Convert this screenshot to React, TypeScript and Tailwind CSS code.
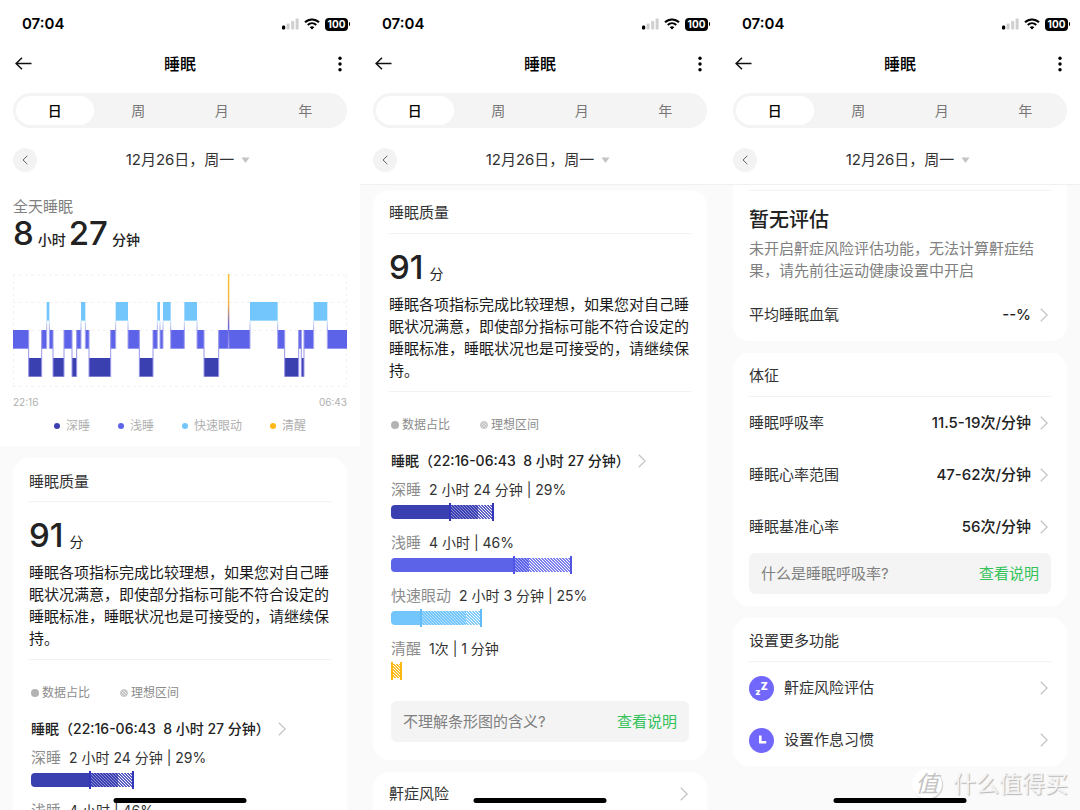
import type { ReactNode } from 'react';

type Level = 'A' | 'R' | 'L' | 'D';

const LEVELS: Record<Level, { y: number; color: string }> = {
  A: { y: 0, color: '#fdb813' },
  R: { y: 84, color: '#72c6fb' },
  L: { y: 168, color: '#5d63e8' },
  D: { y: 252, color: '#3b40b0' },
};

const BAR = 56;
const CHART_END = 1002;

const STAGES: [Level, number][] = [
  ['L', 0], ['D', 47], ['L', 86], ['R', 101], ['L', 109], ['D', 120], ['L', 153], ['D', 177],
  ['L', 191], ['R', 204], ['L', 217], ['D', 228], ['L', 293], ['R', 308], ['L', 345], ['D', 379],
  ['L', 420], ['R', 433], ['L', 441], ['R', 450], ['L', 473], ['R', 514], ['L', 552], ['D', 573],
  ['L', 617], ['R', 711], ['L', 794], ['D', 815], ['L', 857], ['D', 865], ['L', 873], ['R', 902],
  ['L', 943],
];

const AWAKE_AT = 647;

function Chevron() {
  return (
    <svg className="h-3.5 w-2 shrink-0" viewBox="0 0 8 14" fill="none" stroke="#c2c2c2" strokeWidth="1.2" aria-hidden="true">
      <path d="M0.8 0.8 7.2 7 0.8 13.2" />
    </svg>
  );
}

function StatusBar() {
  return (
    <div className="flex h-12 items-center justify-between pr-2.5 pl-[22px]">
      <span className="text-[15px] font-semibold">07:04</span>
      <div className="flex items-center gap-[5px]">
        <svg className="h-3 w-[17px]" viewBox="0 0 17 12" aria-hidden="true">
          <rect x="0" y="7.5" width="3.2" height="4" rx="1.2" fill="#000" />
          <rect x="4.6" y="5.5" width="3" height="6" rx="0.8" fill="#cfcfcf" />
          <rect x="9.2" y="3" width="3" height="8.5" rx="0.8" fill="#cfcfcf" />
          <rect x="13.6" y="0.5" width="3" height="11" rx="0.8" fill="#cfcfcf" />
        </svg>
        <svg className="h-3 w-4" viewBox="0 0 16 12" fill="none" stroke="#000" strokeWidth="2" aria-hidden="true">
          <path d="M1 4.3C5 0.4 11 0.4 15 4.3" />
          <path d="M3.7 7C6.2 4.7 9.8 4.7 12.3 7" />
          <path d="M8 11.5 5.7 9.2C7 8 9 8 10.3 9.2Z" fill="#000" stroke="none" />
        </svg>
        <div className="flex items-center gap-px">
          <span className="flex h-[13px] w-[23px] items-center justify-center rounded-[4px] bg-black text-[10px] leading-none font-bold text-white">
            100
          </span>
          <span className="h-1 w-px rounded-r bg-black" />
        </div>
      </div>
    </div>
  );
}

function Header({ scrolled }: { scrolled: boolean }) {
  return (
    <header className={scrolled ? 'shrink-0 border-b border-[#f0f0f0] bg-white' : 'shrink-0 border-b border-white bg-white'}>
      <StatusBar />
      <div className="flex h-[31px] items-center justify-between pr-[18px] pl-[15px]">
        <button type="button" aria-label="返回" className="w-5">
          <svg className="h-[13px] w-[17px]" viewBox="0 0 17 13" fill="none" stroke="#111" strokeWidth="1.5" aria-hidden="true">
            <path d="M16.5 6.5H1M7 0.7 1.1 6.5 7 12.3" />
          </svg>
        </button>
        <h1 className="text-base font-medium">睡眠</h1>
        <button type="button" aria-label="更多" className="flex w-[17px] justify-end">
          <svg className="h-4 w-1" viewBox="0 0 4 16" aria-hidden="true">
            <circle cx="2" cy="2.3" r="1.7" />
            <circle cx="2" cy="8" r="1.7" />
            <circle cx="2" cy="13.7" r="1.7" />
          </svg>
        </button>
      </div>
      <nav className="mx-[13px] mt-3.5 grid h-[35px] grid-cols-4 rounded-full bg-[#f4f4f4] text-sm text-[#777]">
        <button type="button" className="m-[3px] rounded-full bg-white font-medium text-black">日</button>
        <button type="button" className="m-[3px]">周</button>
        <button type="button" className="m-[3px]">月</button>
        <button type="button" className="m-[3px]">年</button>
      </nav>
      <div className="mx-[13px] mt-5 flex items-center pb-3">
        <button type="button" aria-label="前一天" className="flex size-6 items-center justify-center rounded-full bg-[#f3f3f3]">
          <svg className="h-2.5 w-1.5" viewBox="0 0 6 10" fill="none" stroke="#666" strokeWidth="1" aria-hidden="true">
            <path d="M5.3 0.8 1 5 5.3 9.2" />
          </svg>
        </button>
        <div className="flex flex-1 justify-center pr-2">
          <button type="button" className="flex items-center gap-[7px] text-[15px] leading-6 text-[#333]">
            12月26日，周一
            <svg className="h-1.5 w-[9px]" viewBox="0 0 9 6" fill="#c4c4c4" aria-hidden="true">
              <path d="M0.5 0.5h8L4.5 6Z" />
            </svg>
          </button>
        </div>
      </div>
    </header>
  );
}

function Phone({ scrolled = false, children }: { scrolled?: boolean; children: ReactNode }) {
  return (
    <section className="relative flex h-screen min-w-0 flex-col overflow-hidden bg-[#fafafa]">
      <Header scrolled={scrolled} />
      <div className="flex min-h-0 flex-1 flex-col overflow-hidden">{children}</div>
      <div className="absolute bottom-[7px] left-1/2 h-[5px] w-[133px] -translate-x-1/2 rounded-full bg-black" />
    </section>
  );
}

function SleepChart() {
  return (
    <svg className="block w-full" viewBox="0 0 1002 340" role="img" aria-label="睡眠阶段">
      <defs>
        <linearGradient id="link-rem" x1="0" y1="140" x2="0" y2="168" gradientUnits="userSpaceOnUse">
          <stop offset="0" stopColor="#c9e6fb" />
          <stop offset="1" stopColor="#a6a5ef" />
        </linearGradient>
        <linearGradient id="link-awake" x1="0" y1="0" x2="0" y2="224" gradientUnits="userSpaceOnUse">
          <stop offset="0" stopColor="#fdc02a" />
          <stop offset="0.4" stopColor="#f3b64a" />
          <stop offset="0.7" stopColor="#6b66dc" />
          <stop offset="1" stopColor="#a5a3f2" />
        </linearGradient>
      </defs>
      <path
        d="M0 3H1002M0 85H1002M0 169H1002M0 337H1002M1 3V337M1001 3V337"
        fill="none"
        stroke="#f1f1f1"
        strokeWidth="3"
        strokeDasharray="9 9"
      />
      {STAGES.map(([level, start], i) => {
        const end = i + 1 < STAGES.length ? STAGES[i + 1][1] : CHART_END;
        return (
          <rect key={start} x={start} y={LEVELS[level].y} width={end - start} height={BAR} fill={LEVELS[level].color} />
        );
      })}
      {STAGES.slice(1).map(([level, start], i) => {
        const other = STAGES[i][0];
        const rem = level === 'R' || other === 'R';
        return (
          <rect
            key={start}
            x={start - 1.5}
            y={rem ? 140 : 168}
            width="3"
            height={rem ? 84 : 140}
            fill={rem ? 'url(#link-rem)' : '#9896ea'}
          />
        );
      })}
      <rect x={AWAKE_AT - 2.5} y="0" width="4.5" height="224" fill="url(#link-awake)" />
    </svg>
  );
}

function Card({ title, children }: { title: string; children: ReactNode }) {
  return (
    <section className="mx-[13px] shrink-0 rounded-2xl bg-white px-4">
      <h2 className="flex h-11 items-center border-b border-[#f3f3f3] pt-1 text-[15px] text-[#333]">{title}</h2>
      {children}
    </section>
  );
}

function Tip({ question }: { question: string }) {
  return (
    <div className="flex h-[41px] items-center justify-between rounded-md bg-[#f4f4f4] px-3 pt-px text-[15px]">
      <span className="text-[#808080]">{question}</span>
      <a href="#help" className="text-[#35c25a]">查看说明</a>
    </div>
  );
}

interface Stage {
  name: string;
  value: string;
  low: number;
  actual: number;
  high: number;
  solid: string;
  tick: string;
  dense: string;
  sparse: string;
}

/* Bar positions are percentages of the track width. */
const STAGE_BARS: Stage[] = [
  {
    name: '深睡', value: '2 小时 24 分钟 | 29%', low: 19.6, actual: 28.4, high: 34,
    solid: 'bg-[#3b40b0]', tick: 'bg-[#3236b8]',
    dense: 'bg-[#8f91d8] bg-[linear-gradient(45deg,#3b40b0_25%,transparent_25%_50%,#3b40b0_50%_75%,transparent_75%)]',
    sparse: 'bg-[linear-gradient(45deg,#5a5ec4_25%,transparent_25%_50%,#5a5ec4_50%_75%,transparent_75%)]',
  },
  {
    name: '浅睡', value: '4 小时 | 46%', low: 40.8, actual: 45.6, high: 60,
    solid: 'bg-[#5d63e8]', tick: 'bg-[#5155e4]',
    dense: 'bg-[#a9acf3] bg-[linear-gradient(45deg,#5d63e8_25%,transparent_25%_50%,#5d63e8_50%_75%,transparent_75%)]',
    sparse: 'bg-[linear-gradient(45deg,#7b80ee_25%,transparent_25%_50%,#7b80ee_50%_75%,transparent_75%)]',
  },
  {
    name: '快速眼动', value: '2 小时 3 分钟 | 25%', low: 9.8, actual: 24.6, high: 30,
    solid: 'bg-[#72c6fb]', tick: 'bg-[#63bcf8]',
    dense: 'bg-[#b9e2fd] bg-[linear-gradient(45deg,#72c6fb_25%,transparent_25%_50%,#72c6fb_50%_75%,transparent_75%)]',
    sparse: 'bg-[linear-gradient(45deg,#82cdfb_25%,transparent_25%_50%,#82cdfb_50%_75%,transparent_75%)]',
  },
  {
    name: '清醒', value: '1次 | 1 分钟', low: 0, actual: 0, high: 3,
    solid: 'bg-[#fdb813]', tick: 'bg-[#fdb813]',
    dense: '',
    sparse: 'bg-[linear-gradient(45deg,#fdbf2c_25%,transparent_25%_50%,#fdbf2c_50%_75%,transparent_75%)]',
  },
];

function StageBar({ stage }: { stage: Stage }) {
  return (
    <li>
      <p className="text-sm leading-[22px] text-[#333]">
        <span className="mr-2 text-[15px] text-[#8c8c8c]">{stage.name}</span>
        {stage.value}
      </p>
      <div className="mt-0.5 flex h-[18px] items-center">
        <span className={`h-3.5 rounded-l ${stage.solid}`} style={{ width: `${stage.low}%` }} />
        <span className={`h-[18px] w-0.5 ${stage.tick}`} />
        <span className={`h-3.5 bg-size-[3px_3px] ${stage.dense}`} style={{ width: `${stage.actual - stage.low}%` }} />
        <span className={`h-3.5 bg-size-[3px_3px] ${stage.sparse}`} style={{ width: `${stage.high - stage.actual - 0.7}%` }} />
        <span className={`h-[18px] w-0.5 ${stage.tick}`} />
      </div>
    </li>
  );
}

function QualityCard() {
  return (
    <Card title="睡眠质量">
      <div className="flex items-baseline gap-1.5 pt-4 text-[#222]">
        <span className="text-[33px] leading-[34px] font-medium">91</span>
        <span className="text-sm leading-[22px]">分</span>
      </div>
      <p className="mt-[9px] border-b border-[#f3f3f3] pb-[9px] text-[15px] leading-[22px] text-[#1a1a1a]">
        睡眠各项指标完成比较理想，如果您对自己睡眠状况满意，即使部分指标可能不符合设定的睡眠标准，睡眠状况也是可接受的，请继续保持。
      </p>
      <div className="px-0.5 pb-[18px]">
        <div className="mt-[23px] flex gap-[30px] text-xs leading-5 text-[#8c8c8c]">
          <span className="flex items-center gap-[3px]">
            <i className="size-2 rounded-full bg-[#b3b3b3]" />
            数据占比
          </span>
          <span className="flex items-center gap-[3px]">
            <i className="size-2 rounded-full border border-[#c4c4c4] bg-[#ececec] bg-[linear-gradient(45deg,#c4c4c4_25%,transparent_25%_50%,#c4c4c4_50%_75%,transparent_75%)] bg-size-[3px_3px]" />
            理想区间
          </span>
        </div>
        <button type="button" className="mt-[15px] flex items-center gap-2 text-sm leading-[22px] font-medium whitespace-pre text-[#222]">
          {'睡眠（22:16-06:43  8 小时 27 分钟）'}
          <Chevron />
        </button>
        <ul className="mt-[7px] mb-[21px] flex flex-col gap-[11px]">
          {STAGE_BARS.map((stage) => (
            <StageBar key={stage.name} stage={stage} />
          ))}
        </ul>
        <Tip question="不理解条形图的含义?" />
      </div>
    </Card>
  );
}

function LinkRow({ label, value, icon }: { label: string; value?: string; icon?: ReactNode }) {
  return (
    <button type="button" className="flex h-[52px] w-full items-center pr-[3px] text-left text-[15px] text-[#333]">
      {icon}
      <span className="flex-1">{label}</span>
      {value && <span className="mr-[9px] font-medium text-[#222]">{value}</span>}
      <Chevron />
    </button>
  );
}

const LEGEND = [
  { name: '深睡', dot: 'bg-[#3b40b0]' },
  { name: '浅睡', dot: 'bg-[#5d63e8]' },
  { name: '快速眼动', dot: 'bg-[#72c6fb]' },
  { name: '清醒', dot: 'bg-[#fdb813]' },
];

function DayScreen() {
  return (
    <Phone>
      <div className="shrink-0 bg-white px-[13px] pt-3 pb-2.5">
        <p className="text-[15px] leading-5 text-[#808080]">全天睡眠</p>
        <p className="flex h-8 items-baseline font-medium text-[#222]">
          <span className="text-[33px] leading-8">8</span>
          <span className="mr-[3px] ml-1 text-sm leading-5">小时</span>
          <span className="text-[33px] leading-8">27</span>
          <span className="ml-1 text-sm leading-5">分钟</span>
        </p>
        <div className="mt-[25px]">
          <SleepChart />
        </div>
        <div className="mt-[7px] flex justify-between text-[10px] leading-4 text-[#b0b0b0]">
          <span>22:16</span>
          <span>06:43</span>
        </div>
        <ul className="mt-1.5 flex justify-center gap-7 text-xs leading-5 text-[#b0b0b0]">
          {LEGEND.map((item) => (
            <li key={item.name} className="flex items-center gap-1.5">
              <i className={`size-1.5 rounded-full ${item.dot}`} />
              {item.name}
            </li>
          ))}
        </ul>
      </div>
      <div className="mt-3 flex flex-col">
        <QualityCard />
      </div>
    </Phone>
  );
}

function QualityScreen() {
  return (
    <Phone scrolled>
      <div className="flex flex-col gap-3 pt-[5px]">
        <QualityCard />
        <section className="mx-[13px] rounded-t-2xl bg-white px-4">
          <button type="button" className="flex h-11 w-full items-center justify-between pr-[3px] text-[15px] text-[#333]">
            鼾症风险
            <Chevron />
          </button>
        </section>
      </div>
    </Phone>
  );
}

function SignsScreen() {
  return (
    <Phone scrolled>
      <div className="flex flex-col gap-3">
        <section className="mx-[13px] rounded-b-2xl bg-white px-4 pt-[5px]">
          <div className="border-t border-[#f3f3f3] pt-[15px]">
            <h2 className="text-xl leading-7 font-medium text-[#222]">暂无评估</h2>
            <p className="mt-1 mb-[7px] text-[15px] leading-[22px] text-[#808080]">
              未开启鼾症风险评估功能，无法计算鼾症结果，请先前往运动健康设置中开启
            </p>
            <LinkRow label="平均睡眠血氧" value="--%" />
          </div>
        </section>
        <Card title="体征">
          <LinkRow label="睡眠呼吸率" value="11.5-19次/分钟" />
          <LinkRow label="睡眠心率范围" value="47-62次/分钟" />
          <LinkRow label="睡眠基准心率" value="56次/分钟" />
          <div className="pb-3">
            <Tip question="什么是睡眠呼吸率?" />
          </div>
        </Card>
        <Card title="设置更多功能">
          <LinkRow
            label="鼾症风险评估"
            icon={
              <span className="mr-2.5 flex size-[25px] items-center justify-center rounded-full bg-[#7267fb] leading-none font-black text-white">
                <span className="mt-1.5 text-[9px]">z</span>
                <span className="mb-1 text-[10px]">Z</span>
              </span>
            }
          />
          <LinkRow
            label="设置作息习惯"
            icon={
              <svg className="mr-2.5 size-[25px]" viewBox="0 0 25 25" aria-hidden="true">
                <circle cx="12.5" cy="12.5" r="12.5" fill="#7267fb" />
                <path d="M11.3 7.4V14.2H17.2" fill="none" stroke="#fff" strokeWidth="2.6" />
              </svg>
            }
          />
        </Card>
      </div>
      <div className="absolute right-3 bottom-2.5 flex items-center gap-[11px] text-[23px] leading-8 text-[#f4f4f4] [text-shadow:1px_1px_1px_#b4b4b4]">
        <span className="flex size-[30px] items-center justify-center rounded-full bg-white text-[23px] text-[#c4c4c4] italic shadow-[1px_1px_1px_#ccc] [text-shadow:none]">
          值
        </span>
        什么值得买
      </div>
    </Phone>
  );
}

export default function App() {
  return (
    <main
      lang="zh-CN"
      className="grid grid-cols-3 bg-[#fafafa] font-['Inter','Noto_Sans_CJK_SC',sans-serif] text-black antialiased"
    >
      <DayScreen />
      <QualityScreen />
      <SignsScreen />
    </main>
  );
}
